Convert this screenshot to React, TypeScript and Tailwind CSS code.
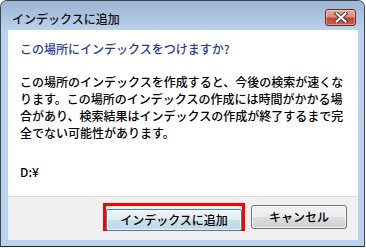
import React from 'react';

const font = { fontFamily: '"Noto Sans CJK JP", "Noto Sans", sans-serif' };

function CloseButton() {
  return (
    <button className="w-[31px] h-[17px] mt-[8px] rounded-[3px] border border-[#6b2c22] bg-[linear-gradient(to_bottom,#e8ac9f_0%,#da8b7c_45%,#c4442d_55%,#cc624d_100%)] shadow-[inset_0_0_0_1px_rgba(255,255,255,0.35)] flex items-center justify-center">
      <svg width="14" height="11" viewBox="0 0 14 11">
        <path d="M2.5 1.5 L11.5 9.5 M11.5 1.5 L2.5 9.5" stroke="#4a3a3a" strokeWidth="4" strokeLinecap="square" />
        <path d="M2.5 1.5 L11.5 9.5 M11.5 1.5 L2.5 9.5" stroke="#ffffff" strokeWidth="2" strokeLinecap="square" />
      </svg>
    </button>
  );
}

export default function App() {
  return (
    <div className="w-[366px] h-[248px] bg-white" style={font}>
      <div className="w-[365px] h-[247px] border border-[#3b4754] border-b-[#1a2a3a] rounded-t-[7px] bg-[#bad2eb] flex flex-col overflow-hidden">
        <div className="h-[29px] flex justify-between items-start pl-[11px] pr-[8px] bg-[linear-gradient(to_bottom,#9db6d3_0%,#a9c2de_50%,#bad2eb_100%)]">
          <span className="text-[12px] leading-[17px] pt-[9px] font-medium text-[#111]">インデックスに追加</span>
          <CloseButton />
        </div>
        <div className="mx-[7px] w-[350px] flex flex-col">
          <div className="h-[166px] bg-white pl-[12px] pt-[10px] text-[12px] leading-[17px] font-medium whitespace-nowrap">
            <p className="text-[#1f3c9e]">この場所にインデックスをつけますか?</p>
            <p className="mt-[16px] text-black">
              この場所のインデックスを作成すると、今後の検索が速くな
              <br />
              ります。この場所のインデックスの作成には時間がかかる場
              <br />
              合があり、検索結果はインデックスの作成が終了するまで完
              <br />
              全でない可能性があります。
            </p>
            <p className="mt-[22px] text-black">D:¥</p>
          </div>
          <div className="h-[44px] border-t border-[#dfdfdf] bg-[#f0f0f0] flex items-start justify-end gap-[6px] pt-[6px] pr-[11px]">
            <div className="w-[142px] h-[28px] border-[3px] border-[#ff0000]">
              <button className="w-full h-full rounded-[2px] border border-[#3c7fb1] bg-[linear-gradient(to_bottom,#eef5fa_0%,#dfebf4_50%,#cadeec_51%,#c2d8e8_100%)] shadow-[inset_0_0_0_1px_rgba(255,255,255,0.7)] text-[12px] leading-none font-medium text-black">
                インデックスに追加
              </button>
            </div>
            <button className="w-[96px] h-[24px] mt-[2px] rounded-[3px] border border-[#707070] bg-[linear-gradient(to_bottom,#f2f2f2_0%,#ebebeb_50%,#dddddd_51%,#cfcfcf_100%)] shadow-[inset_0_0_0_1px_rgba(255,255,255,0.8)] text-[12px] leading-none font-medium text-black">
              キャンセル
            </button>
          </div>
        </div>
      </div>
    </div>
  );
}
